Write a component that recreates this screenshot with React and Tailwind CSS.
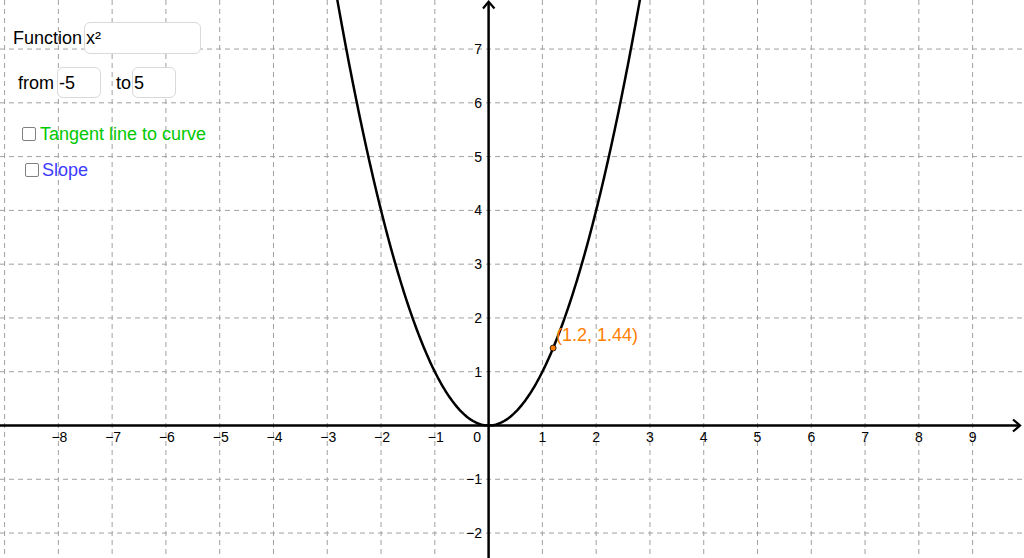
import React from "react";

const OX = 488.6;
const OY = 425.5;
const U = 53.78;
const W = 1024;
const H = 558;
const FONT = '"Liberation Sans", Arial, sans-serif';

function Graph() {
  const vLines = [];
  for (let k = -9; k <= 9; k++) {
    if (k === 0) continue;
    const x = OX + k * U;
    vLines.push(
      <line key={"v" + k} x1={x} y1={0} x2={x} y2={H} stroke="#a0a0a0" strokeWidth="1" strokeDasharray="5 4" />
    );
  }
  const hLines = [];
  for (let k = -2; k <= 7; k++) {
    if (k === 0) continue;
    const y = OY - k * U;
    hLines.push(
      <line key={"h" + k} x1={0} y1={y} x2={W} y2={y} stroke="#a0a0a0" strokeWidth="1" strokeDasharray="5 4" />
    );
  }
  const xLabels = [];
  for (let k = -8; k <= 9; k++) {
    if (k === 0) continue;
    const x = OX + k * U + (k < 0 ? 1 : 0);
    xLabels.push(
      <text key={"xl" + k} x={x} y={442} textAnchor="middle" fontSize="14" fontFamily={FONT} fill="#000">
        {k < 0 ? "\u2212" + -k : String(k)}
      </text>
    );
  }
  const yLabels = [];
  for (let k = -2; k <= 7; k++) {
    if (k === 0) continue;
    const y = OY - k * U + 5;
    yLabels.push(
      <text key={"yl" + k} x={482} y={y} textAnchor="end" fontSize="14" fontFamily={FONT} fill="#000">
        {k < 0 ? "\u2212" + -k : String(k)}
      </text>
    );
  }
  const pts = [];
  for (let i = 0; i <= 240; i++) {
    const xv = -2.9 + (5.8 * i) / 240;
    const px = OX + xv * U;
    const py = OY - xv * xv * U;
    pts.push((i === 0 ? "M" : "L") + px.toFixed(2) + " " + py.toFixed(2));
  }
  const dotX = OX + 1.2 * U;
  const dotY = OY - 1.44 * U;
  return (
    <svg width={W} height={H} viewBox={`0 0 ${W} ${H}`} className="block">
      {vLines}
      {hLines}
      <line x1={0} y1={OY} x2={1020} y2={OY} stroke="#000" strokeWidth="2.5" />
      <polyline points={`1013,419.5 1020,${OY} 1013,431.5`} fill="none" stroke="#000" strokeWidth="2.2" />
      <line x1={OX} y1={H} x2={OX} y2={2} stroke="#000" strokeWidth="2.5" />
      <polyline points={`483,8.5 ${OX},1.7 494.5,8.5`} fill="none" stroke="#000" strokeWidth="2.2" />
      {xLabels}
      {yLabels}
      <text x={481} y={442} textAnchor="end" fontSize="14" fontFamily={FONT} fill="#000">0</text>
      <path d={pts.join(" ")} fill="none" stroke="#000" strokeWidth="2.5" />
      <circle cx={dotX} cy={dotY} r="3" fill="#ff7f00" stroke="#000" strokeWidth="0.8" />
      <text x={556} y={341} fontSize="18" fontFamily={FONT} fill="#ff7f00">(1.2, 1.44)</text>
    </svg>
  );
}

export default function App() {
  return (
    <div className="relative h-[558px] w-[1024px] overflow-hidden bg-white font-['Liberation_Sans',Arial,sans-serif] text-[18px] leading-[20px] text-black">
      <Graph />
      <div className="absolute left-0 top-0 flex flex-col">
        <div className="mt-[22px] flex h-[32px] items-center">
          <span className="ml-[13px]">Function</span>
          <div className="ml-[2px] flex h-[32px] w-[117px] items-center rounded-[6px] border border-[#d9d9d9] bg-white pl-[1px]">
            x²
          </div>
        </div>
        <div className="mt-[13px] flex h-[31px] items-center">
          <span className="ml-[18px]">from</span>
          <div className="ml-[3px] flex h-[31px] w-[44px] items-center rounded-[6px] border border-[#d9d9d9] bg-white pl-[1px]">
            -5
          </div>
          <span className="ml-[15px]">to</span>
          <div className="ml-[1px] flex h-[31px] w-[44px] items-center rounded-[6px] border border-[#d9d9d9] bg-white pl-[1px]">
            5
          </div>
        </div>
        <div className="mt-[26px] flex h-[20px] items-center">
          <div className="ml-[22px] h-[14px] w-[14px] rounded-[2px] border-[1.5px] border-[#808080] bg-white" />
          <span className="ml-[4px] text-[#00c800]">Tangent line to curve</span>
        </div>
        <div className="mt-[16px] flex h-[20px] items-center">
          <div className="ml-[25px] h-[14px] w-[14px] rounded-[2px] border-[1.5px] border-[#808080] bg-white" />
          <span className="ml-[3px] text-[#3c3cff]">Slope</span>
        </div>
      </div>
    </div>
  );
}
